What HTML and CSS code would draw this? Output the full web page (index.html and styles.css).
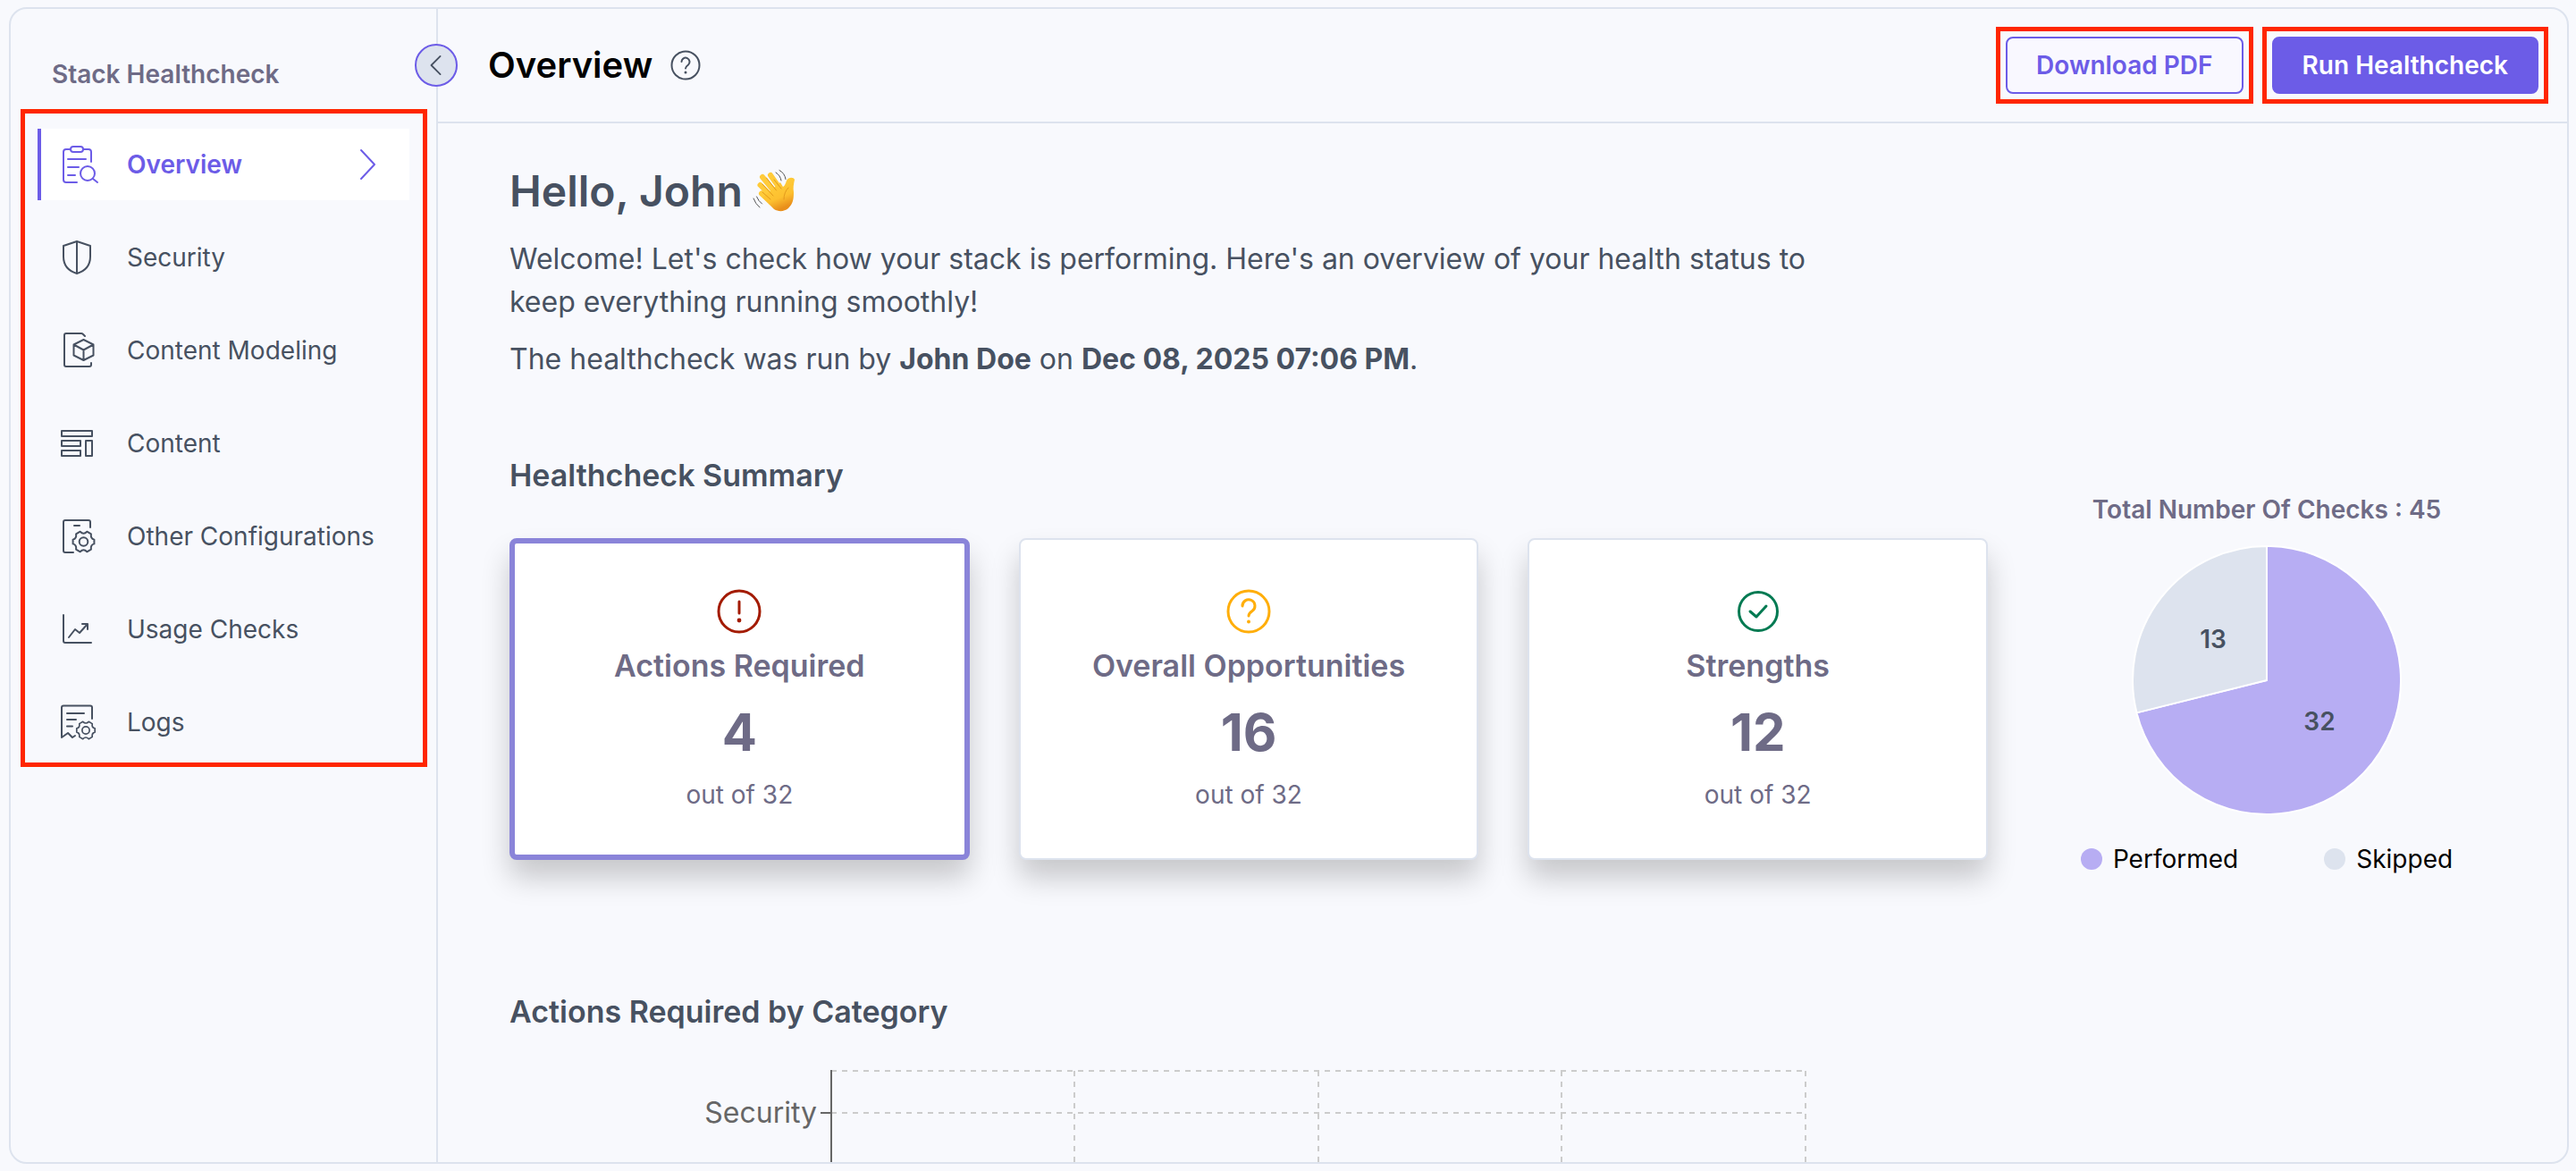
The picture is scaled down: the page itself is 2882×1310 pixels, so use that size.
FILE: index.html
```html
<!DOCTYPE html>
<html lang="en">
<head>
<meta charset="utf-8">
<meta name="viewport" content="width=device-width, initial-scale=1">
<title>Stack Healthcheck</title>
<link rel="stylesheet" href="styles.css">
</head>
<body>
<svg class="defs" aria-hidden="true">
  <symbol id="gear" viewBox="-14 -14 28 28">
    <path d="M11.9 -2.4V2.4Q7.6 3.4 8.4 8.6L3.8 11.3Q0 7.4-3.8 11.3L-8.4 8.6Q-7.6 3.4-11.9 2.4V-2.4Q-7.6-3.4-8.4-8.6L-3.8-11.3Q0-7.4 3.8-11.3L8.4-8.6Q7.6-3.4 11.9-2.4Z"/>
    <circle r="4.8"/>
  </symbol>
</svg>
<div class="panel">
  <aside class="sidebar">
    <h2 class="sidebar-title">Stack Healthcheck</h2>
    <nav class="nav">
      <a class="nav-item active" href="#overview">
        <svg class="icon" viewBox="0 0 48 48"><rect x="17" y="4" width="14" height="6" rx="3"/><path d="M17 7h-5a3 3 0 0 0-3 3v31a3 3 0 0 0 3 3h12M31 7h6a3 3 0 0 1 3 3v11M14 18h20M14 27h12M14 36h8M42 40l5 4"/><circle cx="36" cy="34" r="8"/></svg>
        <span>Overview</span>
        <svg class="chevron" viewBox="0 0 20 36"><path d="M2 2l15 16L2 34"/></svg>
      </a>
      <a class="nav-item" href="#security">
        <svg class="icon" viewBox="0 0 48 48"><path d="M24 6l15 5v12c0 9-5 16-15 19C14 39 9 32 9 23V11zM24 6v36"/></svg>
        <span>Security</span>
      </a>
      <a class="nav-item" href="#modeling">
        <svg class="icon" viewBox="0 0 48 48"><path d="M33 8l-2-2q-1-1-2-1H12a2 2 0 0 0-2 2v33a2 2 0 0 0 2 2h26a2 2 0 0 0 2-2v-2M31.500 12l11 5.500v12l-11 5.500-11-5.500v-12zM20.500 17.500l11 6 11-6M31.500 23.500V35"/></svg>
        <span>Content Modeling</span>
      </a>
      <a class="nav-item" href="#content">
        <svg class="icon" viewBox="0 0 48 48"><rect x="7" y="10" width="34" height="6"/><rect x="7" y="21" width="21" height="6"/><rect x="7" y="32" width="21" height="6"/><rect x="34" y="21" width="7" height="17"/></svg>
        <span>Content</span>
      </a>
      <a class="nav-item" href="#configurations">
        <svg class="icon" viewBox="0 0 48 48"><path d="M39 14V8a2 2 0 0 0-2-2H11a2 2 0 0 0-2 2v32a2 2 0 0 0 2 2h9M21 12h6"/><use href="#gear" x="17.500" y="16" width="28" height="28"/></svg>
        <span>Other Configurations</span>
      </a>
      <a class="nav-item" href="#usage">
        <svg class="icon" viewBox="0 0 48 48"><path d="M9 8v29a2 2 0 0 0 2 2h29M15 33l7-9 5 4 9-10M30 18h6v6"/></svg>
        <span>Usage Checks</span>
      </a>
      <a class="nav-item" href="#logs">
        <svg class="icon" viewBox="0 0 48 48"><path d="M41 20V7.500a2 2 0 0 0-2-2H9a2 2 0 0 0-2 2V41l7-5 5 5 3-2M13 14h19M13 21h10M13 28.500h6"/><use href="#gear" x="22" y="21" width="24" height="24"/></svg>
        <span>Logs</span>
      </a>
    </nav>
    <button class="collapse" type="button" aria-label="Collapse sidebar"><svg viewBox="0 0 48 48"><path d="M29 13L18 24l11 11"/></svg></button>
  </aside>

  <main class="main">
    <header class="header">
      <h1 class="page-title">Overview</h1>
      <svg class="help" viewBox="0 0 34 34" role="img" aria-label="Help"><circle cx="17" cy="17" r="15.500"/><path d="M12.500 13a4.500 4.500 0 1 1 7.500 3.500c-2 1.500-3 2.500-3 4"/><circle class="dot" cx="17" cy="25" r="1.500"/></svg>
      <div class="actions">
        <div class="frame"><button class="btn btn-outline" type="button">Download PDF</button></div>
        <div class="frame"><button class="btn btn-primary" type="button">Run Healthcheck</button></div>
      </div>
    </header>

    <div class="content">
      <section class="intro">
        <h2 class="greeting">Hello, John
          <svg class="wave" viewBox="0 0 50 50" role="img" aria-label="Waving hand">
            <defs><linearGradient id="skin" x1="0" y1="0" x2="0.400" y2="1"><stop offset="0" stop-color="#ffd23e"/><stop offset="0.700" stop-color="#fdc02f"/><stop offset="1" stop-color="#e98f1b"/></linearGradient></defs>
            <g class="fingers"><path d="M12 9l14 17M21 7l12 17M9.500 18l14 14M11 27.500l11 10"/></g>
            <path fill="url(#skin)" d="M12 32L32 15l3 5c2-1 3-4 4-7 2-4 8-4 9-1-1 5-2 9-1 14 0 8-1 13-6 18-5 4-11 4-16 1z"/>
            <path class="crease" d="M16.500 10l11 14M12 17l12 13M12 26l9 8M25 12l8 10M36 34q0-8 5-13"/>
            <path class="motion" d="M27 4q5 3 6 9M31 1.500q6 3 7 10M2 33q2 6 7 10M5.500 31q2 5 6 8"/>
          </svg>
        </h2>
        <p class="lead">Welcome! Let's check how your stack is performing. Here's an overview of your health status to keep everything running smoothly!</p>
        <p class="lead">The healthcheck was run by <strong>John Doe</strong> on <strong>Dec 08, 2025 07:06 PM</strong>.</p>
      </section>

      <section class="summary">
        <div class="summary-main">
          <h3 class="section-title">Healthcheck Summary</h3>
          <div class="cards">
            <article class="card selected">
              <svg class="card-icon red" viewBox="0 0 56 56"><circle cx="28" cy="28" r="23"/><path d="M28 17v13"/><circle class="dot" cx="28" cy="38" r="2.400"/></svg>
              <h4>Actions Required</h4><strong class="count">4</strong><span class="total">out of 32</span>
            </article>
            <article class="card">
              <svg class="card-icon amber" viewBox="0 0 56 56"><circle cx="28" cy="28" r="23"/><path d="M21 22a7 7 0 1 1 11 5.500c-3 2-4 3-4 5.500"/><circle class="dot" cx="28" cy="39.500" r="2"/></svg>
              <h4>Overall Opportunities</h4><strong class="count">16</strong><span class="total">out of 32</span>
            </article>
            <article class="card">
              <svg class="card-icon green" viewBox="0 0 56 56"><circle cx="28" cy="28" r="21.500"/><path d="M19 28l7 6 11-12"/></svg>
              <h4>Strengths</h4><strong class="count">12</strong><span class="total">out of 32</span>
            </article>
          </div>
        </div>
        <div class="checks">
          <h4 class="checks-title">Total Number Of Checks : 45</h4>
          <svg class="pie" viewBox="-151 -151 302 302">
            <path class="performed" d="M0 0V-150A150 150 0 1 1-145.500 36.400Z"/>
            <path class="skipped" d="M0 0L-145.500 36.400A150 150 0 0 1 0-150Z"/>
            <text x="-60" y="-36">13</text>
            <text x="59" y="56">32</text>
          </svg>
          <ul class="legend">
            <li><span class="swatch performed"></span>Performed</li>
            <li><span class="swatch skipped"></span>Skipped</li>
          </ul>
        </div>
      </section>

      <section class="category">
        <h3 class="section-title">Actions Required by Category</h3>
        <svg class="chart" viewBox="0 0 1480 400">
          <path class="grid" d="M360 1H1450M360 48H1450M632 1V400M905 1V400M1177 1V400M1450 1V400"/>
          <path class="axis" d="M360 0V400M348 48H360"/>
          <text x="344" y="59">Security</text>
        </svg>
      </section>
    </div>
  </main>
</div>
</body>
</html>
```
FILE: styles.css
```css
* { box-sizing: border-box; }
body {
  margin: 0;
  height: 100vh;
  padding: 8px 8px 8px 10px;
  overflow: hidden;
  background: #f8f9fd;
  color: #475161;
  font: 28px/40px Inter, sans-serif;
}
h1, h2, h3, h4, p, ul { margin: 0; padding: 0; font-weight: 600; }
.defs { display: none; }
svg { flex: none; fill: none; stroke: currentColor; stroke-width: 2; stroke-linecap: round; stroke-linejoin: round; }
.dot { fill: currentColor; stroke: none; }

.panel {
  display: flex;
  height: 100%;
  border: 2px solid #dde3ee;
  border-radius: 20px;
}

/* Sidebar */
.sidebar {
  position: relative;
  flex: none;
  width: 478px;
  padding: 53px 10px 0 11px;
  border-right: 2px solid #dde3ee;
}
.sidebar-title {
  margin: 0 0 19px 35px;
  color: #6e6b86;
  font-size: 28px;
  line-height: 40px;
}
.nav {
  display: flex;
  flex-direction: column;
  gap: 24px;
  padding: 17px 15px 5px 14px;
  border: 5px solid #ff2600;
}
.nav-item {
  display: flex;
  align-items: center;
  gap: 32px;
  height: 80px;
  padding: 0 36px 0 16px;
  border-left: 4px solid transparent;
  color: #475161;
  text-decoration: none;
  white-space: nowrap;
}
.nav-item.active {
  border-color: #6c5ce7;
  background: #fff;
  color: #6c5ce7;
  font-weight: 600;
}
.icon { width: 48px; height: 48px; }
.chevron { width: 20px; height: 36px; margin-left: auto; }
.collapse {
  position: absolute;
  top: 39px;
  right: -24px;
  width: 48px;
  height: 48px;
  padding: 0;
  border: 2px solid #6c5ce7;
  border-radius: 50%;
  background: #dde3ee;
  color: #475161;
}
.collapse svg { display: block; width: 44px; height: 44px; }

/* Header */
.main { display: flex; flex: 1; flex-direction: column; min-width: 0; overflow: hidden; }
.header {
  display: flex;
  flex: none;
  align-items: center;
  height: 128px;
  padding: 0 21px 0 56px;
  border-bottom: 2px solid #dde3ee;
}
.page-title { color: #000; font-size: 40px; line-height: 48px; }
.help { width: 34px; height: 34px; margin-left: 20px; }
.actions { display: flex; gap: 10px; margin-left: auto; }
.frame { padding: 6px; border: 5px solid #ff2600; }
.btn {
  display: block;
  height: 64px;
  padding: 0 32px;
  border: 2px solid #6c5ce7;
  border-radius: 8px;
  font: 600 28px/40px Inter, sans-serif;
}
.btn-outline { background: #f9f8ff; color: #6c5ce7; }
.btn-primary { background: #6c5ce7; color: #fff; }

/* Content */
.content { flex: 1; min-height: 0; padding: 48px 80px 0; overflow: hidden; }
.greeting { display: flex; align-items: center; gap: 10px; font-size: 48px; line-height: 56px; margin-bottom: 24px; }
.wave { width: 50px; height: 50px; stroke: none; }
.fingers { stroke: #ffcb3a; stroke-width: 6; }
.crease { stroke: #e39a1c; stroke-width: 1; }
.motion { stroke: #555; stroke-width: 1; }
.lead { max-width: 1520px; font-size: 32px; line-height: 48px; font-weight: 400; }
.lead + .lead { margin-top: 16px; }
.lead strong { font-weight: 700; }
.section-title { font-size: 34px; line-height: 48px; }

.summary { display: flex; gap: 56px; margin-top: 82px; }
.summary-main { flex: 1; }
.cards { display: grid; grid-template-columns: repeat(3, 1fr); gap: 55px; margin-top: 46px; }
.card {
  display: flex;
  flex-direction: column;
  align-items: center;
  justify-content: center;
  height: 360px;
  border: 2px solid #dde3ee;
  border-radius: 8px;
  background: #fff;
  box-shadow: 0 20px 32px rgba(0, 0, 0, .2);
  color: #6e6b86;
}
.card.selected { border: 6px solid #8a84d9; }
.card h4 { margin: 9px 0 18px; font-size: 34px; line-height: 48px; }
.card-icon { width: 56px; height: 56px; stroke-width: 3; }
.count { font-size: 58px; line-height: 64px; }
.total { margin-top: 18px; }
.red { color: #a31b00; }
.amber { color: #ffae0a; }
.green { color: #007a52; }

.checks { display: flex; flex: none; flex-direction: column; align-items: center; width: 512px; padding-top: 42px; }
.checks-title { color: #6e6b86; font-size: 28px; }
.pie { width: 302px; height: 302px; margin: 20px 0 29px; }
.pie path { stroke: #fff; }
.pie text { fill: #475161; stroke: none; font-weight: 600; text-anchor: middle; }
.performed { fill: #b7adf3; background: #b7adf3; }
.skipped { fill: #dde3ee; background: #dde3ee; }
.legend { display: flex; gap: 96px; color: #000; font-weight: 400; list-style: none; }
.legend li { display: flex; align-items: center; gap: 12px; }
.swatch { width: 24px; height: 24px; border-radius: 50%; }

.category { margin-top: 127px; }
.chart { display: block; width: 1480px; height: 400px; margin-top: 41px; }
.chart path { stroke-linecap: butt; }
.grid { stroke: #ccc; stroke-dasharray: 6 6; }
.axis { stroke: #666; }
.chart text { fill: #666; stroke: none; font-size: 32px; text-anchor: end; }
```
